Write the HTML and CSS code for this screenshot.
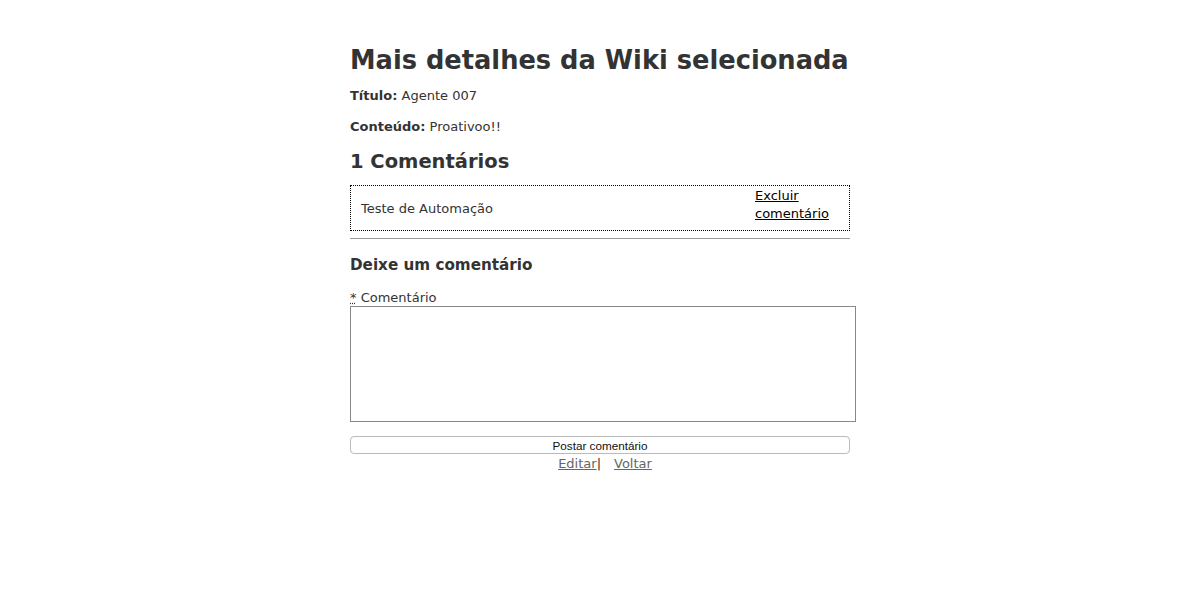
FILE: index.html
```html
<!DOCTYPE html>
<html lang="pt">
<head>
<meta charset="utf-8">
<title>Wiki</title>
<link rel="stylesheet" href="styles.css">
</head>
<body>
<div class="page">
  <h1 class="title">Mais detalhes da Wiki selecionada</h1>
  <p class="field"><strong>Título:</strong> Agente 007</p>
  <p class="field"><strong>Conteúdo:</strong> Proativoo!!</p>
  <h2 class="count">1 Comentários</h2>
  <div class="comment">
    <div class="comment-text">Teste de Automação</div>
    <div class="comment-action"><a href="#">Excluir comentário</a></div>
  </div>
  <hr class="sep">
  <h3 class="leave">Deixe um comentário</h3>
  <form class="form">
    <label class="label"><abbr title="obrigatório">*</abbr> Comentário</label>
    <textarea class="input"></textarea>
    <button type="button" class="submit">Postar comentário</button>
  </form>
  <div class="links"><a href="#">Editar</a>|<a href="#" class="back">Voltar</a></div>
</div>
</body>
</html>
```
FILE: styles.css
```css
body {
  margin: 0;
  background: #fff;
  color: #333;
  font-family: "DejaVu Sans", Verdana, sans-serif;
  font-size: 13px;
}
.page {
  width: 500px;
  margin: 0 auto;
  padding-top: 40px;
}
.title {
  font-size: 25.7px;
  font-weight: bold;
  margin: 0 0 8px;
  line-height: 40px;
  white-space: nowrap;
}
.field {
  margin: 0 0 15px;
  line-height: 16px;
}
.count {
  font-size: 19.5px;
  margin: 0 0 11px;
  line-height: 24px;
}
.comment {
  display: flex;
  align-items: center;
  border: 1px dotted #000;
  padding: 0 10px;
  height: 44px;
}
.comment-text {
  flex: 1;
}
.comment-action {
  width: 84px;
  line-height: 18px;
  margin-bottom: 6px;
}
.comment-action a {
  color: #000;
}
.sep {
  border: 0;
  border-top: 1px solid #999;
  height: 0;
  margin: 7px 0 0;
}
.leave {
  font-size: 15.2px;
  margin: 16px 0 15px;
  line-height: 20px;
}
.form {
  display: flex;
  flex-direction: column;
}
.label {
  line-height: 16px;
}
.label abbr {
  text-decoration: underline dotted;
}
.input {
  width: 500px;
  height: 110px;
  margin: 0;
  padding: 2px;
  border: 1px solid #888;
  resize: none;
  font-family: inherit;
}
.submit {
  margin-top: 14px;
  width: 500px;
  height: 18px;
  padding: 0;
  border: 1px solid #bbb;
  border-radius: 4px;
  background: #fff;
  color: #111;
  font-family: "Liberation Sans", Arial, sans-serif;
  font-size: 11.7px;
}
.links {
  text-align: center;
  line-height: 18px;
  color: #333;
  padding-left: 10px;
  margin-top: 1px;
}
.links a {
  color: #666;
}
.links .back {
  margin-left: 13px;
}
```
